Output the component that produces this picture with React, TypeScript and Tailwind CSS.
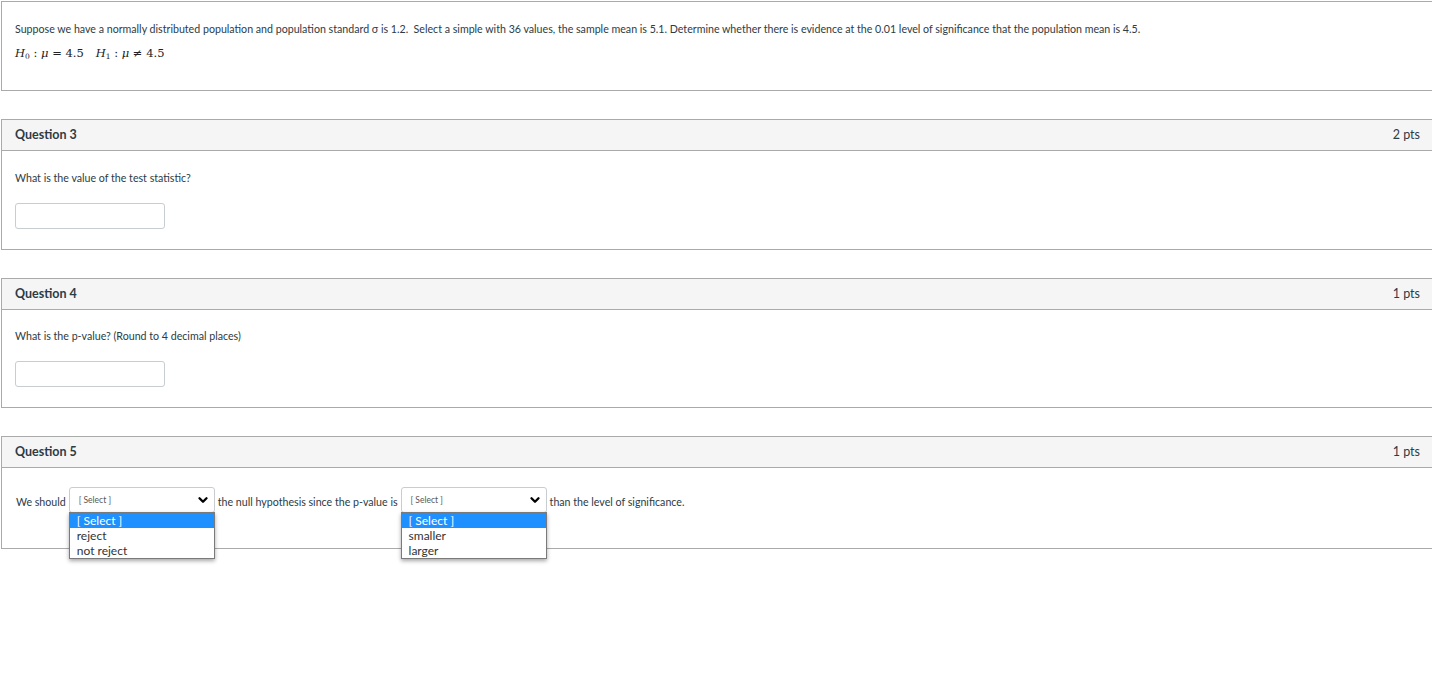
import React from 'react';
import { ChevronDown } from 'lucide-react';

const FONT = { fontFamily: 'Lato, "Helvetica Neue", Arial, sans-serif' };

const Header: React.FC<{ title: string; pts: string }> = ({ title, pts }) => (
  <div className="flex items-center justify-between h-[31px] pl-[13px] pr-[13px] bg-[#f5f5f5] border-b border-[#aaaaaa] text-[12.5px] text-[#2d3b45]">
    <span className="font-bold">{title}</span>
    <span>{pts}</span>
  </div>
);

const TextInput: React.FC = () => (
  <div className="w-[150px] h-[26px] border border-[#c7cdd1] rounded-[3px] bg-white" />
);

const FakeSelect: React.FC<{ options: string[] }> = ({ options }) => (
  <div className="relative inline-block mx-[3px]">
    <div className="flex items-center justify-between w-[146px] h-[26px] pl-[9px] pr-[4px] border border-[#c7cdd1] rounded-[3px] bg-white">
      <span className="text-[8.5px] leading-[12px] text-[#555] -mt-[1px]">[ Select ]</span>
      <ChevronDown className="w-[14px] h-[14px] text-black" strokeWidth={4} />
    </div>
    <div className="absolute left-0 top-[25px] w-[146px] border border-[#7a7a7a] bg-white shadow-[0_2px_4px_rgba(0,0,0,0.35)] z-10">
      {options.map((o, i) => (
        <div
          key={o}
          className={`h-[15px] leading-[15px] pl-[7px] text-[12px] ${i === 0 ? 'bg-[#1e90ff] text-white' : 'text-[#333]'}`}
        >
          {o}
        </div>
      ))}
    </div>
  </div>
);

const Box: React.FC<{ children: React.ReactNode; className?: string }> = ({ children, className }) => (
  <div className={`ml-[1px] w-[1433px] border border-[#aaaaaa] bg-white ${className ?? ''}`}>{children}</div>
);

const App: React.FC = () => {
  return (
    <div className="w-[1432px] h-[688px] overflow-hidden bg-white pt-[1px] text-[#2d3b45]" style={FONT}>
      {/* Intro */}
      <Box className="h-[90px] pt-[19px] px-[13px]">
        <p className="text-[10.65px] leading-[16px]">
          Suppose we have a normally distributed population and population standard σ is 1.2.&nbsp; Select a simple with 36 values, the sample mean is 5.1. Determine whether there is evidence at the 0.01 level of significance that the population mean is 4.5.
        </p>
        <p className="mt-[8px] text-[11.5px] leading-[16px] text-[#222]" style={{ fontFamily: '"DejaVu Serif", "Liberation Serif", serif' }}>
          <i>H</i><sub className="text-[7.5px]">0</sub> : <i>μ</i> = 4.5<span className="inline-block w-[12px]" />
          <i>H</i><sub className="text-[7.5px]">1</sub> : <i>μ</i> ≠ 4.5
        </p>
      </Box>

      {/* Question 3 */}
      <Box className="mt-[28px]">
        <Header title="Question 3" pts="2 pts" />
        <div className="pt-[19px] pb-[20px] px-[13px]">
          <p className="text-[10.65px] leading-[16px]">What is the value of the test statistic?</p>
          <div className="mt-[17px]">
            <TextInput />
          </div>
        </div>
      </Box>

      {/* Question 4 */}
      <Box className="mt-[28px]">
        <Header title="Question 4" pts="1 pts" />
        <div className="pt-[18px] pb-[20px] px-[13px]">
          <p className="text-[10.65px] leading-[16px]">What is the p-value? (Round to 4 decimal places)</p>
          <div className="mt-[17px]">
            <TextInput />
          </div>
        </div>
      </Box>

      {/* Question 5 */}
      <Box className="mt-[28px]">
        <Header title="Question 5" pts="1 pts" />
        <div className="h-[80px] pt-[19px] px-[14px]">
          <div className="flex items-start text-[10.65px] leading-[26px]">
            <span className="mt-[2px]">We should</span>
            <FakeSelect options={['[ Select ]', 'reject', 'not reject']} />
            <span className="mt-[2px]">the null hypothesis since the p-value is</span>
            <FakeSelect options={['[ Select ]', 'smaller', 'larger']} />
            <span className="mt-[2px]">than the level of significance.</span>
          </div>
        </div>
      </Box>
    </div>
  );
};

export default App;
